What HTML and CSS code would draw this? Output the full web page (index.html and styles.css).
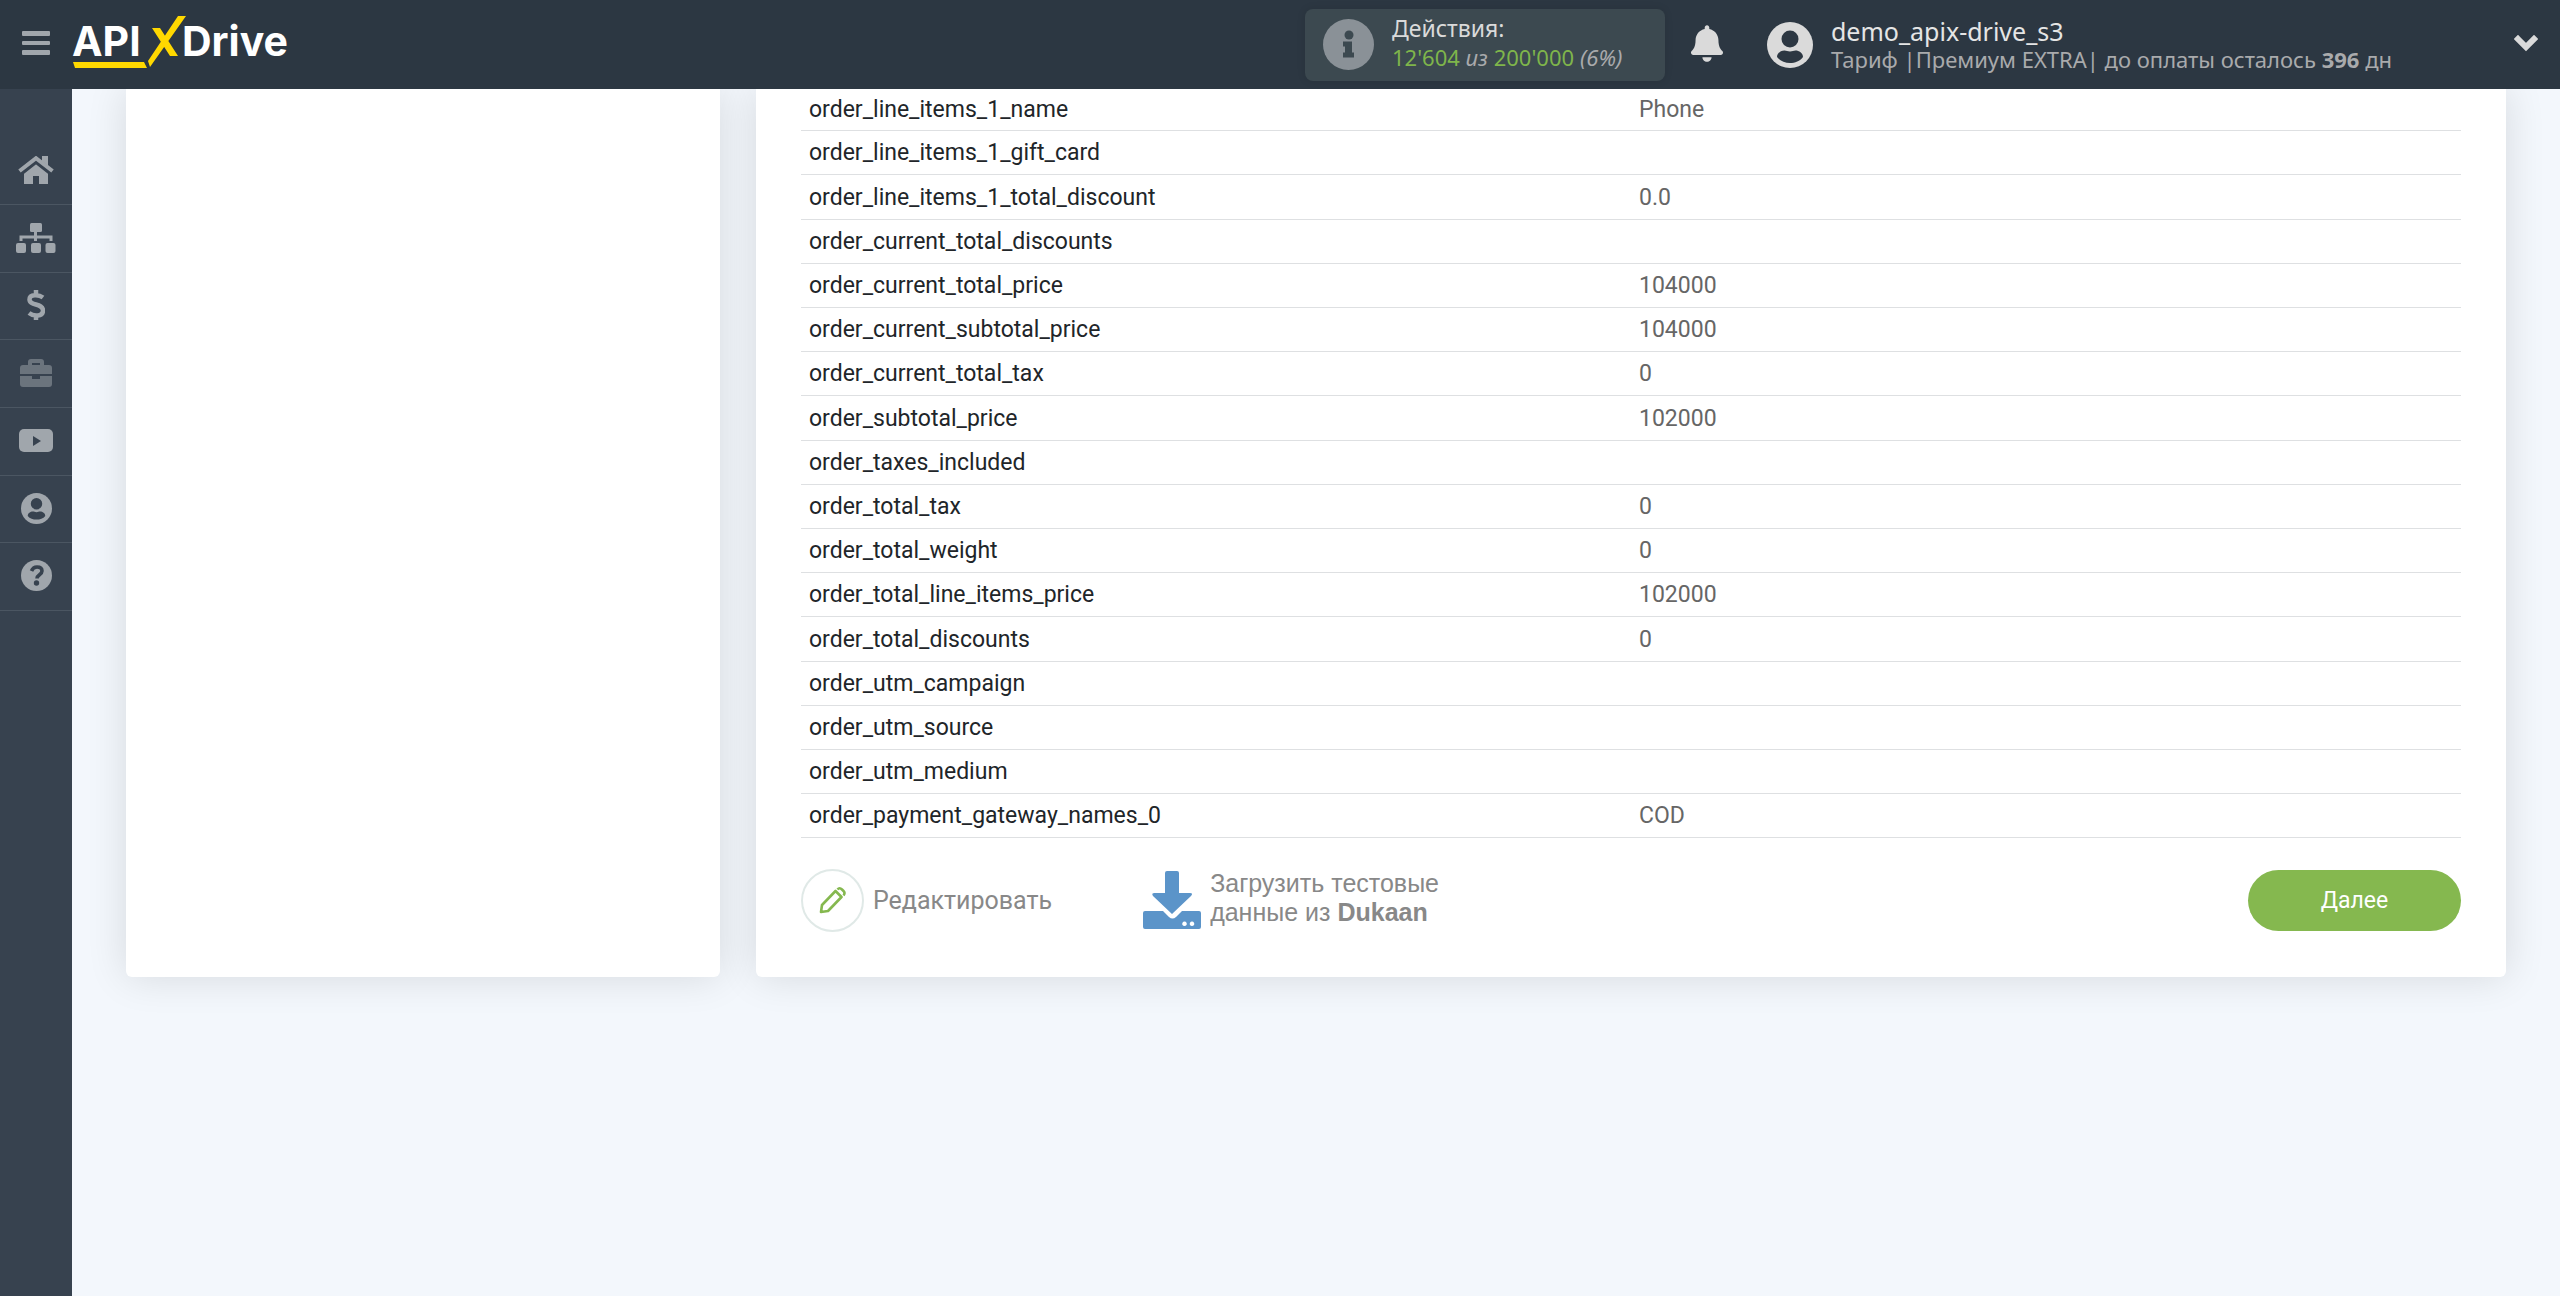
FILE: index.html
```html
<!DOCTYPE html>
<html lang="ru">
<head>
<meta charset="utf-8">
<title>ApiX-Drive</title>
<link rel="stylesheet" href="styles.css">
</head>
<body>
<header class="topbar">
  <button class="menu-btn" type="button" aria-label="Меню"><svg width="28" height="24" viewBox="0 0 28 24"><g fill="#a0a6ac"><rect width="28" height="5" rx="1"/><rect y="10" width="28" height="4" rx="1"/><rect y="19" width="28" height="5" rx="1"/></g></svg></button>
  <a class="logo" href="#" aria-label="APIXDrive">
    <svg width="226" height="56" viewBox="0 0 226 56">
      <g class="logo-text"><text x="0" y="42">API</text><text x="110" y="42">Drive</text></g>
      <path fill="#ffd800" d="M1 48h71l3 6H3zM76 47L106 2h8L78 53zM80 14h8l18 28h-8z"/>
    </svg>
  </a>
  <section class="usage">
    <svg width="51" height="51" viewBox="0 0 51 51"><circle cx="25.500" cy="25.500" r="25.500" fill="#8a9197"/><g fill="#3c4950"><circle cx="26" cy="16" r="4.500"/><path d="M20 22.500h9v11h2v5H20v-5h2v-6h-2z"/></g></svg>
    <div class="usage-text">
      <div class="usage-title">Действия:</div>
      <div class="usage-line"><b>12'604</b> <i>из</i> <b>200'000</b> <i>(6%)</i></div>
    </div>
  </section>
  <button class="bell" type="button" aria-label="Уведомления"><svg width="32" height="37" viewBox="0 0 448 512"><path fill="#dadada" d="M224 512c35.320 0 63.970-28.650 63.970-64H160.030c0 35.350 28.650 64 63.970 64zm215.390-149.710c-19.320-20.760-55.470-51.990-55.470-154.290 0-77.700-54.480-139.900-127.940-155.160V32c0-17.670-14.320-32-31.980-32s-31.980 14.330-31.980 32v20.840C118.560 68.100 64.080 130.300 64.080 208c0 102.300-36.150 133.530-55.470 154.290-6 6.450-8.660 14.160-8.610 21.710.110 16.400 12.980 32 32.100 32h383.800c19.120 0 32-15.600 32.100-32 .050-7.550-2.610-15.270-8.610-21.710z"/></svg></button>
  <a class="account" href="#">
    <svg width="46" height="46" viewBox="0 0 46 46"><circle cx="23" cy="23" r="23" fill="#dadada"/><g fill="#2c3742"><circle cx="23" cy="17" r="8.500"/><path d="M10 35c0-4 4-6.500 7.500-6.500 2 0 3 1 5.500 1s3.500-1 5.500-1c3.500 0 7.500 2.500 7.500 6.500-3 4-8 6-13 6s-10-2-13-6z"/></g></svg>
    <span class="account-text"><span class="account-name">demo_apix-drive_s3</span><span class="account-plan">Тариф |Премиум EXTRA| до оплаты осталось <b>396</b> дн</span></span>
  </a>
  <button class="expand" type="button" aria-label="Развернуть"><svg width="24" height="17" viewBox="0 0 24 17"><path d="M4 4l8 8 8-8" fill="none" stroke="#dadada" stroke-width="6" stroke-linecap="square"/></svg></button>
</header>
<div class="shell">
  <nav class="sidebar">
    <a href="#" aria-label="Главная"><svg width="36" height="28" viewBox="0 0 36 28"><g fill="#a0a6ac"><path d="M18 7l12 10v11h-9v-8h-6v8H6V17z"/><path d="M24 0h6v10l-6-5z"/></g><path d="M1.500 15L18 2.200 34.500 15" fill="none" stroke="#a0a6ac" stroke-width="4"/><path d="M4 18.500L18 7.300 32 18.500" fill="none" stroke="#37424f" stroke-width="1.500"/></svg></a>
    <a href="#" aria-label="Связи"><svg width="40" height="30" viewBox="0 0 40 30"><g fill="#a0a6ac"><rect x="14" width="12" height="9" rx="1.500"/><rect y="20" width="10" height="10" rx="2"/><rect x="15" y="20" width="10" height="10" rx="2"/><rect x="29.500" y="20" width="10" height="10" rx="2"/></g><path d="M19.500 8v10M5 18v-4h30v4" fill="none" stroke="#a0a6ac" stroke-width="3"/></svg></a>
    <a href="#" aria-label="Оплата"><svg width="18" height="30" viewBox="0 0 18 30"><path d="M16 7.500C12 4.500 2.500 4 2.500 9.500c0 6.500 13.500 3.500 13.500 11 0 6-9 6.500-14 2.500M9 0v5M9 25v5" fill="none" stroke="#a0a6ac" stroke-width="4.500"/></svg></a>
    <a href="#" class="dim" aria-label="Проекты"><svg width="32" height="28" viewBox="0 0 32 28"><path fill="#a0a6ac" fill-rule="evenodd" d="M8 6V3q0-3 3-3h10q3 0 3 3v3h5q3 0 3 3v6H0V9q0-3 3-3zM12 6h8V4h-8zM0 17h12v3h8v-3h12v8q0 3-3 3H3q-3 0-3-3z"/></svg></a>
    <a href="#" aria-label="Видео"><svg width="34" height="24" viewBox="0 0 34 24"><rect width="34" height="23" rx="5" fill="#a0a6ac"/><path d="M14 7l8 5-8 5z" fill="#37424f"/></svg></a>
    <a href="#" aria-label="Профиль"><svg width="31" height="31" viewBox="0 0 46 46"><circle cx="23" cy="23" r="23" fill="#a0a6ac"/><g fill="#37424f"><circle cx="23" cy="16" r="8.500"/><path d="M10 34c0-4 4-6.500 7.500-6.500 2 0 3 1 5.500 1s3.500-1 5.500-1c3.500 0 7.500 2.500 7.500 6.500-3 4-8 5.500-13 5.500s-10-1.500-13-5.500z"/></g></svg></a>
    <a href="#" aria-label="Помощь"><svg width="31" height="31" viewBox="0 0 31 31"><circle cx="15.500" cy="15.500" r="15.500" fill="#a0a6ac"/><path d="M10.500 11q1.500-4 5.500-4 5 0 5 4c0 4-5 3.500-5 7.500" fill="none" stroke="#37424f" stroke-width="3.600"/><circle cx="15.500" cy="23" r="2.700" fill="#37424f"/></svg></a>
  </nav>
  <main class="content">
    <aside class="card"></aside>
    <section class="card card-main">
      <table class="fields">
        <tr><th scope="row">order_line_items_1_name</th><td>Phone</td></tr>
        <tr><th scope="row">order_line_items_1_gift_card</th><td></td></tr>
        <tr><th scope="row">order_line_items_1_total_discount</th><td>0.0</td></tr>
        <tr><th scope="row">order_current_total_discounts</th><td></td></tr>
        <tr><th scope="row">order_current_total_price</th><td>104000</td></tr>
        <tr><th scope="row">order_current_subtotal_price</th><td>104000</td></tr>
        <tr><th scope="row">order_current_total_tax</th><td>0</td></tr>
        <tr><th scope="row">order_subtotal_price</th><td>102000</td></tr>
        <tr><th scope="row">order_taxes_included</th><td></td></tr>
        <tr><th scope="row">order_total_tax</th><td>0</td></tr>
        <tr><th scope="row">order_total_weight</th><td>0</td></tr>
        <tr><th scope="row">order_total_line_items_price</th><td>102000</td></tr>
        <tr><th scope="row">order_total_discounts</th><td>0</td></tr>
        <tr><th scope="row">order_utm_campaign</th><td></td></tr>
        <tr><th scope="row">order_utm_source</th><td></td></tr>
        <tr><th scope="row">order_utm_medium</th><td></td></tr>
        <tr><th scope="row">order_payment_gateway_names_0</th><td>COD</td></tr>
      </table>
      <div class="actions">
        <button class="action" type="button"><span class="round"><svg width="28" height="28" viewBox="0 0 28 28"><path d="M2 26l1-7L16.500 5l6 6L9 25zM18.500 3.500q2-2.500 4.500 0l1.500 1.500q2 2 0 4.500" fill="none" stroke="#85b84f" stroke-width="2.600" stroke-linejoin="round"/></svg></span>Редактировать</button>
        <button class="action action-load" type="button"><svg width="58" height="58" viewBox="0 0 58 58"><g fill="#5b94c9"><path d="M22 2q0-2 2-2h10q2 0 2 2v20h11q3.500 0 1 3L29 43 10 25q-2-3 1.500-3H22z"/><path fill-rule="evenodd" d="M2 40h18l6 6q3.500 3 7 0l6-6h17q2 0 2 2v14q0 2-2 2H2q-2 0-2-2V42q0-2 2-2zM41.500 50.500a2.300 2.300 0 1 0 .01 0zM49 50.500a2.300 2.300 0 1 0 .01 0z"/></g></svg><span class="load-text">Загрузить тестовые<br>данные из <b>Dukaan</b></span></button>
        <button class="next" type="button">Далее</button>
      </div>
    </section>
  </main>
</div>
</body>
</html>
```
FILE: styles.css
```css
* { box-sizing: border-box; }
body {
  margin: 0;
  min-height: 100vh;
  display: flex;
  flex-direction: column;
  background: #f3f7fc;
  font-family: Roboto, "Liberation Sans", sans-serif;
  font-size: 23px;
  color: #212529;
}
button {
  padding: 0;
  border: 0;
  background: none;
  font: inherit;
  color: inherit;
}
a { color: inherit; text-decoration: none; }
svg { display: block; flex: none; }
.topbar {
  position: relative;
  z-index: 1;
  display: flex;
  align-items: center;
  height: 89px;
  padding: 0 22px;
  background: #2c3742;
  font-family: "Noto Sans", "Open Sans", sans-serif;
}
.menu-btn { margin-right: 22px; padding-bottom: 4px; }
.logo { padding-bottom: 5px; }
.logo-text {
  fill: #fff;
  font: 700 41px Inter, sans-serif;
}
.usage {
  display: flex;
  align-items: center;
  gap: 18px;
  width: 360px;
  height: 72px;
  margin-left: auto;
  padding: 0 18px;
  border-radius: 8px;
  background: #3c4950;
  box-shadow: 0 0 8px rgba(0, 0, 0, 0.1);
}
.usage-text { padding-bottom: 4px; line-height: 29px; color: #a9aaac; font-size: 22px; }
.usage-title { color: #dadada; font-size: 23px; }
.usage-line b { color: #7fb54b; font-weight: 400; }
.bell { margin: 0 44px 0 26px; padding-bottom: 2px; }
.account { display: flex; align-items: center; gap: 18px; }
.account-text {
  display: flex;
  flex-direction: column;
  line-height: 28px;
  font-size: 22px;
  color: #a9aaac;
}
.account-name { font-size: 25px; color: #e5e5e5; }
.expand { margin-left: 122px; padding-bottom: 2px; }
.shell { flex: 1; display: flex; }
.sidebar {
  flex: none;
  width: 72px;
  padding-top: 48px;
  background: #37424f;
}
.sidebar a {
  display: flex;
  align-items: center;
  justify-content: center;
  height: 68px;
  padding-bottom: 2px;
  border-bottom: 1px solid #4b5662;
}
.sidebar a:nth-child(3n) { height: 67px; }
.dim svg { opacity: 0.5; }
.content {
  flex: 1;
  display: grid;
  grid-template-columns: 594fr 1750fr;
  gap: 36px;
  align-items: stretch;
  align-content: start;
  padding: 0 54px 80px;
}
.card {
  border-radius: 0 0 6px 6px;
  background: #fff;
  box-shadow: 0 0 40px rgba(0, 0, 0, 0.12);
}
.card-main { padding: 0 45px 45px; }
.fields {
  width: 100%;
  table-layout: fixed;
  border-collapse: collapse;
}
.fields tr { height: 44px; border-bottom: 1px solid #dee0e2; }
.fields tr:first-child { height: 41px; }
.fields tr:nth-child(5n + 3) { height: 45px; }
.fields th,
.fields td {
  padding: 2px 8px 0;
  line-height: 34px;
  font-weight: 400;
  text-align: left;
}
.fields td { color: #666; }
.actions {
  display: flex;
  align-items: center;
  padding-top: 31px;
  color: #888;
  font-size: 25px;
}
.action {
  display: flex;
  align-items: center;
  gap: 9px;
  line-height: 29px;
  text-align: left;
}
.action-load {
  margin-left: 91px;
  font-family: "Liberation Sans", sans-serif;
}
.load-text { padding-bottom: 4px; }
.round {
  display: grid;
  place-items: center;
  width: 63px;
  height: 63px;
  border: 2px solid #e0e9e7;
  border-radius: 50%;
}
.next {
  width: 213px;
  height: 61px;
  margin-left: auto;
  border-radius: 31px;
  background: #85b84f;
  color: #fff;
  font-size: 23px;
}
```
